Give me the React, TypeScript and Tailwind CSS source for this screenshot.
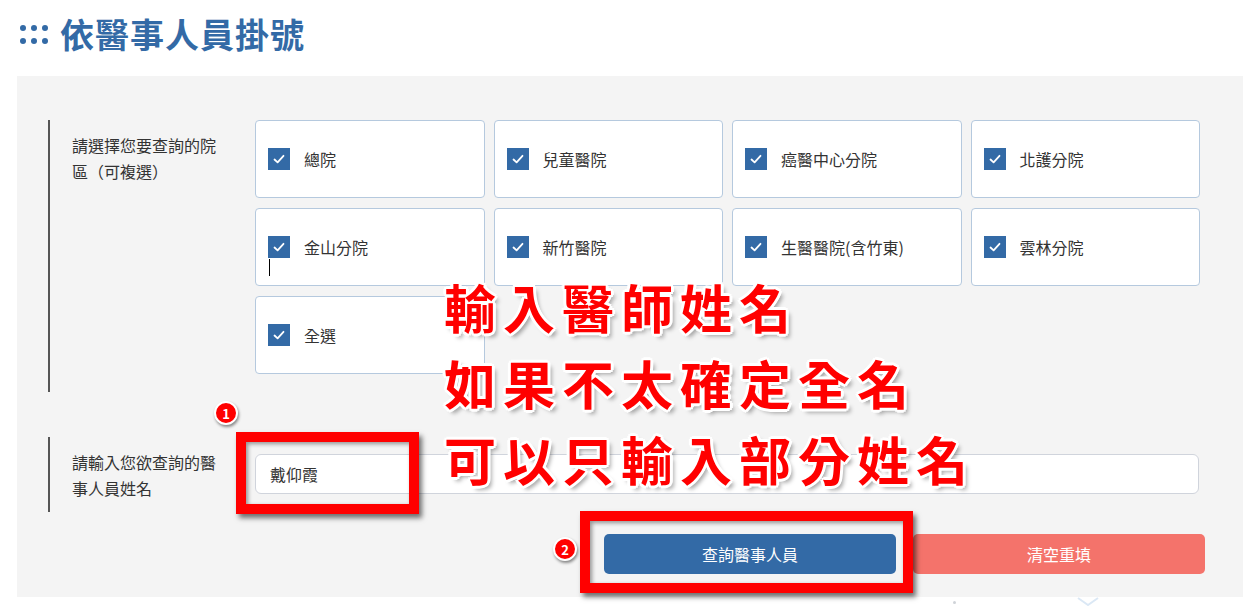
import React from "react";

const hospitals = [
  "總院",
  "兒童醫院",
  "癌醫中心分院",
  "北護分院",
  "金山分院",
  "新竹醫院",
  "生醫醫院(含竹東)",
  "雲林分院",
  "全選",
];

function Check() {
  return (
    <span className="flex h-[22px] w-[22px] shrink-0 items-center justify-center bg-[#336aa6]">
      <svg width="14" height="14" viewBox="0 0 14 14" fill="none">
        <path d="M2.5 7.5 L5.6 10.4 L11.5 3.8" stroke="#fff" strokeWidth="1.8" strokeLinecap="round" strokeLinejoin="round" />
      </svg>
    </span>
  );
}

function Badge({ n }: { n: string }) {
  return (
    <span className="flex h-[24px] w-[24px] items-center justify-center rounded-full border-2 border-white bg-[#f00] text-[13px] font-bold leading-none text-white shadow-[1px_2px_3px_rgba(0,0,0,0.45)]">
      {n}
    </span>
  );
}

const redText =
  "text-[52px] font-bold leading-[76px] tracking-[7px] text-[#ff0000] [text-shadow:3px_0_0_#fff,-3px_0_0_#fff,0_3px_0_#fff,0_-3px_0_#fff,2px_2px_0_#fff,-2px_-2px_0_#fff,2px_-2px_0_#fff,-2px_2px_0_#fff,4px_4px_4px_rgba(0,0,0,0.35)]";

export default function App() {
  return (
    <div
      className="relative h-[606px] w-[1257px] overflow-hidden bg-white text-[#333]"
      style={{ fontFamily: '"Noto Sans CJK TC", "Noto Sans", sans-serif' }}
    >
      {/* Title */}
      <div className="flex h-[76px] items-center pl-[20px] pb-[8px]">
        <div className="grid grid-cols-3 gap-x-[5px] gap-y-[7px]">
          {Array.from({ length: 6 }).map((_, i) => (
            <span key={i} className="h-[6px] w-[6px] rounded-full bg-[#336aa6]" />
          ))}
        </div>
        <h1 className="ml-[12px] text-[34px] font-bold leading-none tracking-[1px] text-[#336aa6]">
          依醫事人員掛號
        </h1>
      </div>

      {/* Panel */}
      <div className="mx-[17px] w-[1226px] bg-[#f4f4f4] pt-[44px] pb-[23px] pl-[31px] pr-[38px]">
        {/* Group 1 */}
        <div className="flex border-l-2 border-[#555] pb-[18px] pl-[22px]">
          <div className="w-[150px] shrink-0 pt-[12px] text-[16px] leading-[26px]">
            請選擇您要查詢的院區（可複選）
          </div>
          <div className="ml-[33px] grid w-[945px] grid-cols-4 gap-x-[9px] gap-y-[10px]">
            {hospitals.map((h, i) => (
              <div
                key={h}
                className="relative flex h-[78px] items-center gap-[14px] rounded-[4px] border border-[#b5c9de] bg-white pl-[12px]"
              >
                <Check />
                <span className="text-[16px]">{h}</span>
                {i === 4 && (
                  <span className="absolute left-[13px] top-[50px] h-[17px] w-px bg-black" />
                )}
              </div>
            ))}
          </div>
        </div>

        {/* Group 2 */}
        <div className="mt-[45px] flex border-l-2 border-[#555] pl-[22px]">
          <div className="w-[150px] shrink-0 pt-[12px] text-[16px] leading-[26px]">
            請輸入您欲查詢的醫事人員姓名
          </div>
          <div className="ml-[33px] mt-[17px] mb-[18px] flex h-[40px] w-[944px] items-center rounded-[6px] border border-[#d0d4dc] bg-white pl-[14px] text-[16px]">
            戴仰霞
          </div>
        </div>

        {/* Buttons */}
        <div className="mt-[22px] flex justify-end gap-[17px]">
          <button className="flex h-[40px] w-[292px] items-center justify-center rounded-[5px] bg-[#336aa6] text-[16px] text-white">
            查詢醫事人員
          </button>
          <button className="flex h-[40px] w-[292px] items-center justify-center rounded-[5px] bg-[#f4736b] text-[16px] text-white">
            清空重填
          </button>
        </div>
      </div>

      {/* below panel */}
      <div className="relative h-[12px]">
        <span className="absolute left-[953px] top-[4px] h-[3px] w-[3px] rounded-full bg-[#cfd3d8]" />
        <svg className="absolute left-[1076px] top-0" width="24" height="10" viewBox="0 0 24 10">
          <path d="M2 1 L12 8 L22 1" fill="none" stroke="#dbe8f5" strokeWidth="2" />
        </svg>
      </div>

      {/* Annotations */}
      <div className="absolute left-[236px] top-[432px] h-[82px] w-[183px] border-[10px] border-[#ff0000] shadow-[3px_4px_5px_rgba(0,0,0,0.55),inset_2px_2px_4px_rgba(0,0,0,0.4)]" />
      <div className="absolute left-[580px] top-[511px] h-[82px] w-[333px] border-[10px] border-[#ff0000] shadow-[3px_4px_5px_rgba(0,0,0,0.55),inset_2px_2px_4px_rgba(0,0,0,0.4)]" />
      <div className="absolute left-[214px] top-[401px]">
        <Badge n="1" />
      </div>
      <div className="absolute left-[553px] top-[537px]">
        <Badge n="2" />
      </div>

      <div className={"absolute left-[444px] top-[269px] whitespace-nowrap " + redText}>
        <div>輸入醫師姓名</div>
        <div>如果不太確定全名</div>
        <div>可以只輸入部分姓名</div>
      </div>
    </div>
  );
}
